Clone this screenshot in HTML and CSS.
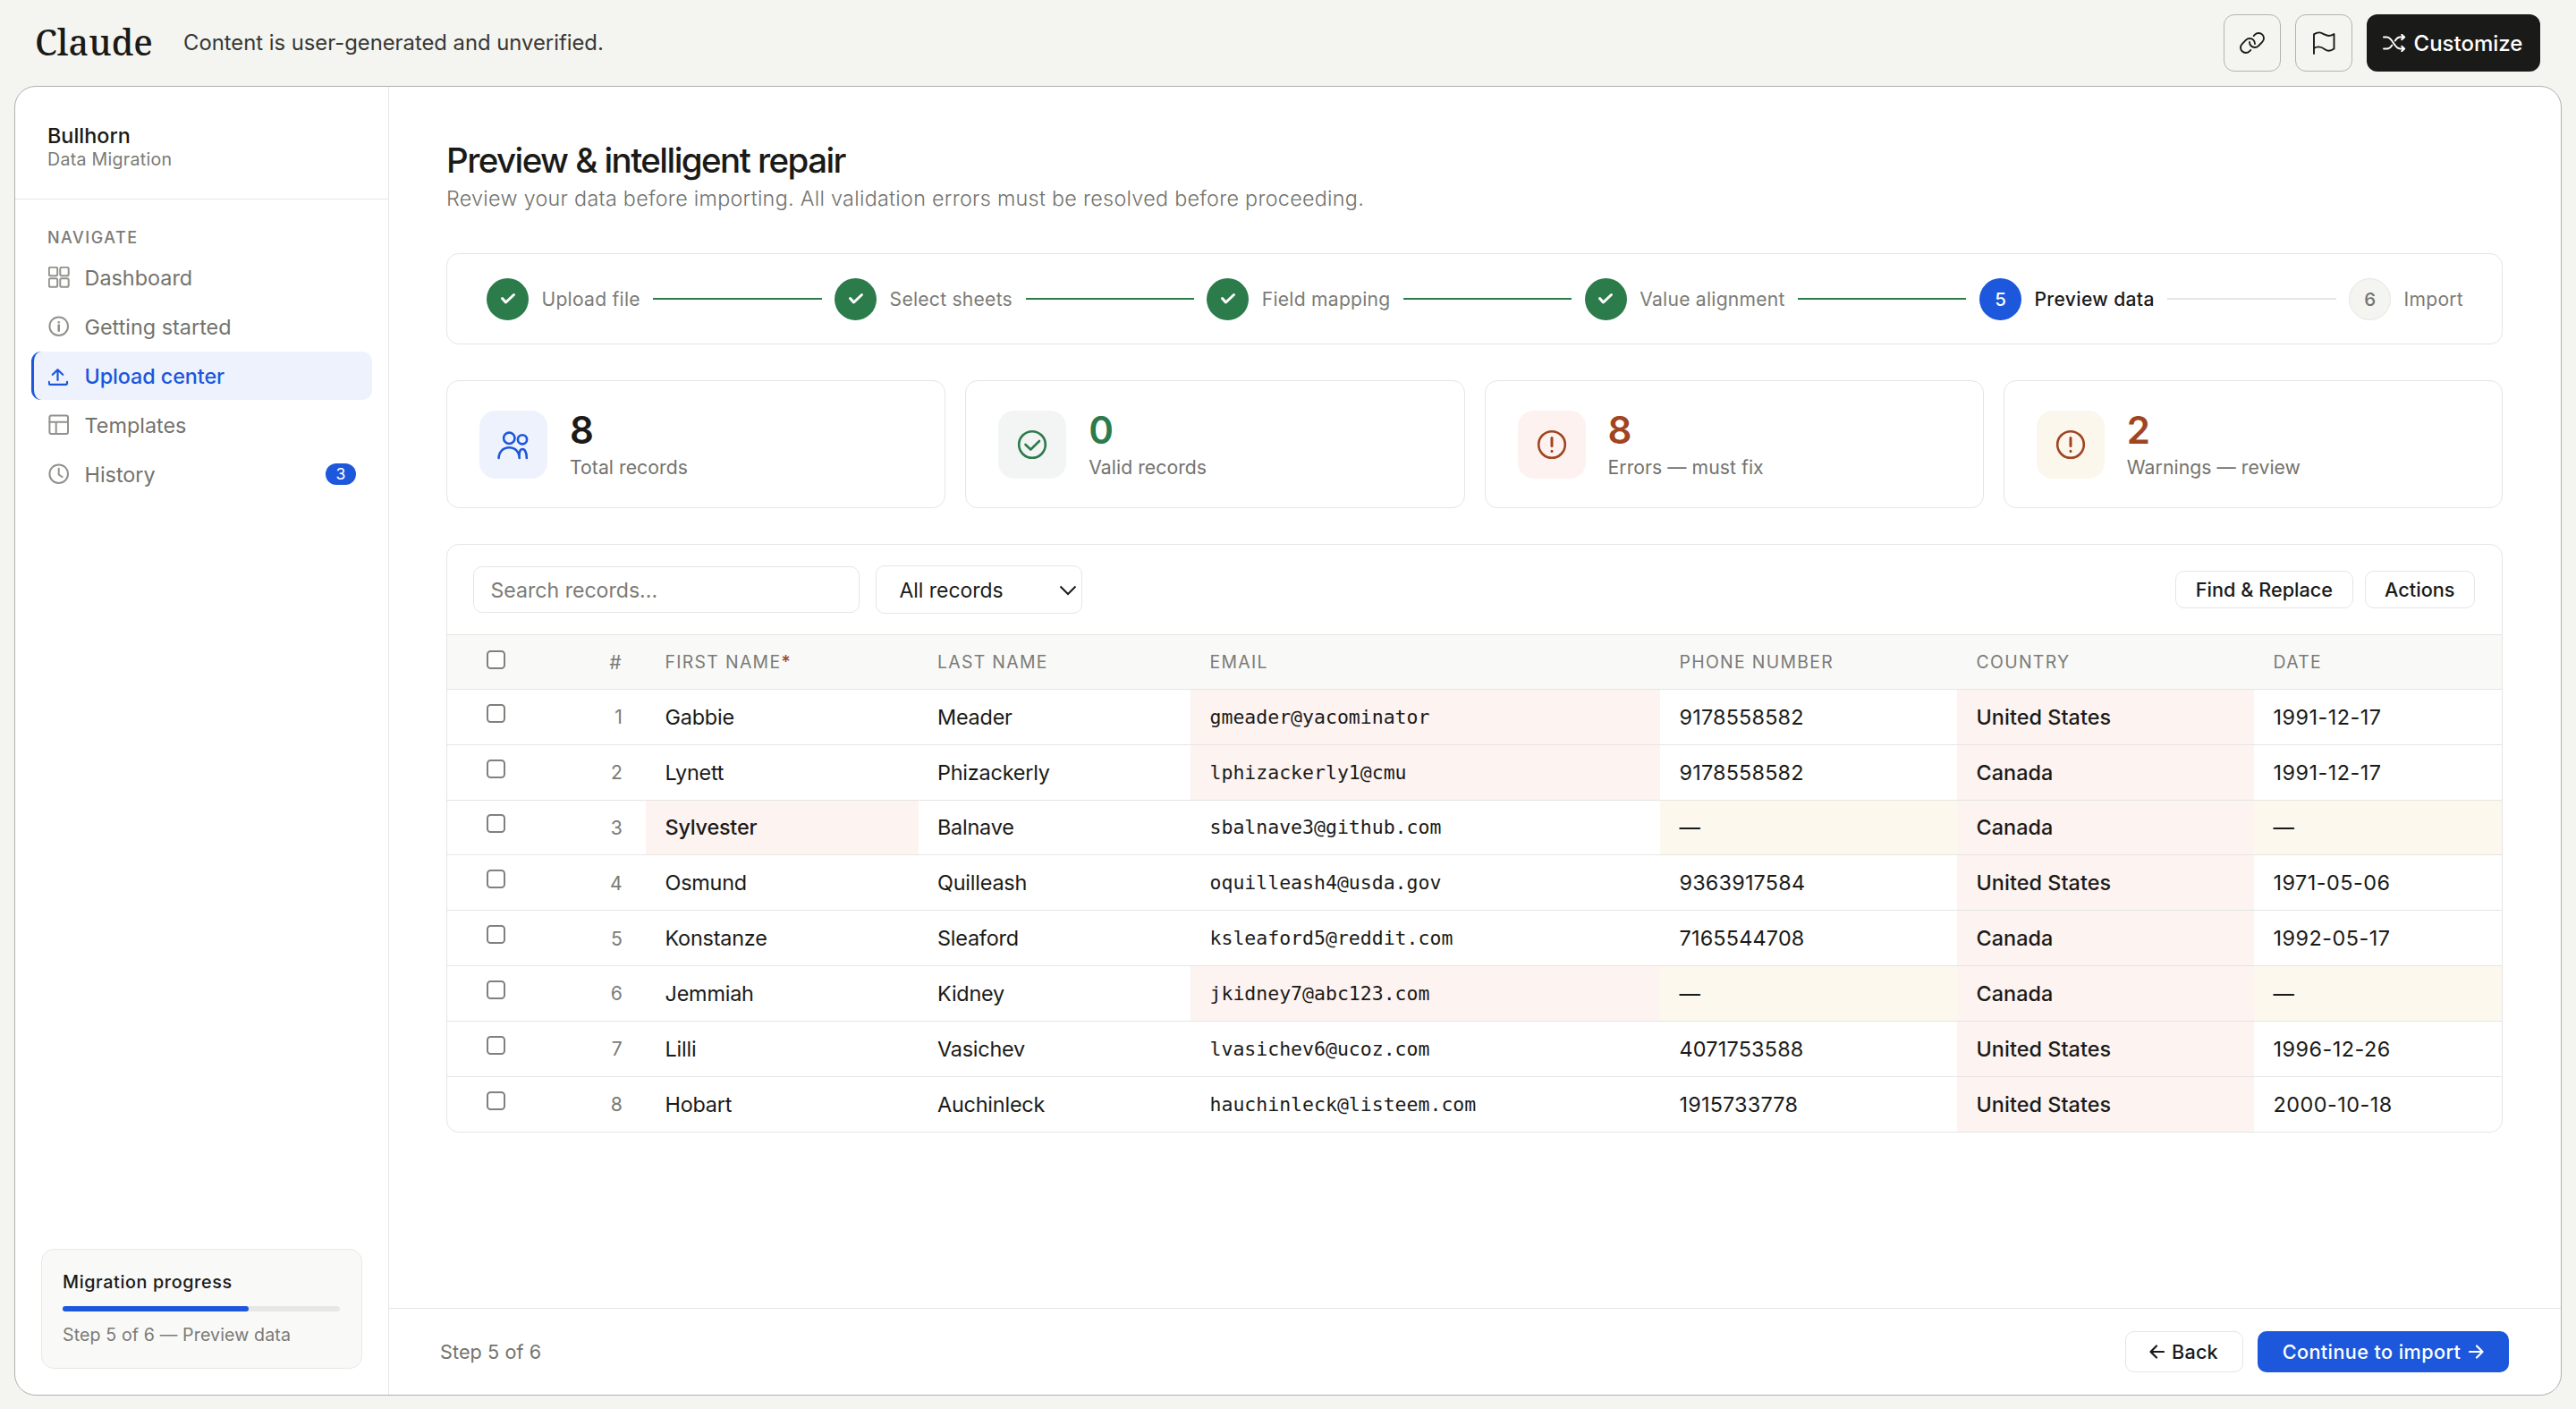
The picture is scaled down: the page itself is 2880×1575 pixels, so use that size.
FILE: index.html
```
<!DOCTYPE html>
<html lang="en">
<head>
<meta charset="utf-8">
<title>Bullhorn Data Migration</title>
<link rel="stylesheet" href="styles.css">
</head>
<body>
<header class="topbar">
  <div class="wordmark">Claude</div>
  <div class="notice">Content is user-generated and unverified.</div>
  <div class="top-actions">
    <button class="square-btn" aria-label="Copy link"><svg width="32" height="32" viewBox="0 0 256 256" fill="none" stroke="currentColor" stroke-width="15" stroke-linecap="round" stroke-linejoin="round"><path d="M141.38 64.68l11-11a46.62 46.62 0 0 1 65.94 0a46.62 46.62 0 0 1 0 65.94L193.94 144 183.6 154.34a46.63 46.63 0 0 1-66-.05A46.48 46.48 0 0 1 104 120.06"/><path d="M114.62 191.32l-11 11a46.63 46.63 0 0 1-66-.05a46.63 46.63 0 0 1 .06-65.89L72.4 101.66a46.62 46.62 0 0 1 65.94 0A46.45 46.45 0 0 1 152 135.94"/></svg></button>
    <button class="square-btn" aria-label="Report"><svg width="26" height="26" viewBox="0 0 26 26" fill="none" stroke="currentColor" stroke-width="1.9" stroke-linecap="round" stroke-linejoin="round"><path d="M2 25V3.4C7.5-.3 10.5 1.8 13.5 3.4S20.5 6 24.5 3v16.6C20.5 22.5 17 22.3 14 20S7.5 15.600 2 18.900"/></svg></button>
    <button class="customize"><svg width="26" height="20" viewBox="0 0 26 20" fill="none" stroke="currentColor" stroke-width="1.9" stroke-linecap="round" stroke-linejoin="round"><path d="M1 3.500H4.500C11.500 3.500 12 16.500 19.500 16.500H24M1 16.500H4.500C7.500 16.500 9 14.600 10.300 12.500M13.800 7.500C15.200 5.200 16.800 3.500 19.500 3.500H24M21.200 .8L24.200 3.500L21.200 6.300M21.200 13.700L24.200 16.500L21.200 19.200"/></svg>Customize</button>
  </div>
</header>
<div class="frame">
  <aside class="sidebar">
    <div class="brand">
      <div class="brand-name">Bullhorn</div>
      <div class="brand-sub">Data Migration</div>
    </div>
    <div class="nav-title">NAVIGATE</div>
    <nav class="nav">
      <a class="nav-item"><svg class="nav-icon" viewBox="0 0 24 24"><rect x=".8" y=".8" width="9.400" height="9.400" rx="1.800"/><rect x="13.300" y=".8" width="9.400" height="9.400" rx="1.800"/><rect x=".8" y="13.300" width="9.400" height="9.400" rx="1.800"/><rect x="13.300" y="13.300" width="9.400" height="9.400" rx="1.800"/></svg><span>Dashboard</span></a>
      <a class="nav-item"><svg class="nav-icon" viewBox="0 0 24 24"><circle cx="11.700" cy="11.700" r="10.300"/><path d="M11.700 10.500V16.800M11.700 7.200V7.300" stroke-width="2.600"/></svg><span>Getting started</span></a>
      <a class="nav-item active"><svg class="nav-icon" viewBox="0 0 24 24"><path d="M.8 18.800V20.200Q.8 21.800 2.400 21.800H19.400Q21 21.800 21 20.200V18.800M10.500 17V5.500M4.800 10.800L10.500 5.200L16.200 10.800"/></svg><span>Upload center</span></a>
      <a class="nav-item"><svg class="nav-icon" viewBox="0 0 24 24"><rect x="1.400" y="1.400" width="20.600" height="20.600" rx="2"/><path d="M1.400 8.700H22M8.700 8.700V22"/></svg><span>Templates</span></a>
      <a class="nav-item"><svg class="nav-icon" viewBox="0 0 24 24"><circle cx="11.700" cy="11.700" r="10.300"/><path d="M11.700 5.800V12.500L15.700 15.300"/></svg><span>History</span><span class="badge">3</span></a>
    </nav>
    <div class="progress-card">
      <div class="progress-title">Migration progress</div>
      <div class="bar"><div class="bar-fill" style="width:67%"></div></div>
      <div class="progress-sub">Step 5 of 6 — Preview data</div>
    </div>
  </aside>
  <div class="content">
    <main class="main">
      <h1>Preview &amp; intelligent repair</h1>
      <p class="lead">Review your data before importing. All validation errors must be resolved before proceeding.</p>
      <div class="stepper">
        <div class="dot done"><svg width="46" height="46" viewBox="0 0 46 46"><path d="M16.500 22.500L20.500 27L29.500 18.500"/></svg></div><span class="step-label">Upload file</span><i class="line done"></i>
        <div class="dot done"><svg width="46" height="46" viewBox="0 0 46 46"><path d="M16.500 22.500L20.500 27L29.500 18.500"/></svg></div><span class="step-label">Select sheets</span><i class="line done"></i>
        <div class="dot done"><svg width="46" height="46" viewBox="0 0 46 46"><path d="M16.500 22.500L20.500 27L29.500 18.500"/></svg></div><span class="step-label">Field mapping</span><i class="line done"></i>
        <div class="dot done"><svg width="46" height="46" viewBox="0 0 46 46"><path d="M16.500 22.500L20.500 27L29.500 18.500"/></svg></div><span class="step-label">Value alignment</span><i class="line done"></i>
        <div class="dot current">5</div><span class="step-label on">Preview data</span><i class="line"></i>
        <div class="dot">6</div><span class="step-label">Import</span>
      </div>
      <section class="stats">
        <div class="stat"><div class="tile blue"><svg width="76" height="76" viewBox="0 0 76 76"><circle cx="33.300" cy="30.800" r="6.200"/><circle cx="48" cy="32.300" r="5.100"/><path d="M21.600 53C21.600 46.300 26.500 41.300 33.300 41.300S44.700 46.300 44.700 53M44.600 50C44.600 45 46 43 48.300 43S52.800 46.500 52.800 53"/></svg></div><div><div class="num">8</div><div class="stat-label">Total records</div></div></div>
        <div class="stat"><div class="tile gray"><svg width="76" height="76" viewBox="0 0 76 76"><circle cx="38" cy="38" r="14.800"/><path d="M30.500 38L36.300 43.500L46 34"/></svg></div><div><div class="num green">0</div><div class="stat-label">Valid records</div></div></div>
        <div class="stat"><div class="tile red"><svg width="76" height="76" viewBox="0 0 76 76"><circle cx="38" cy="38" r="14.800"/><path d="M38 30.500V39.500M38 45.200V45.400" stroke-width="3"/></svg></div><div><div class="num rust">8</div><div class="stat-label">Errors — must fix</div></div></div>
        <div class="stat"><div class="tile amber"><svg width="76" height="76" viewBox="0 0 76 76"><circle cx="38" cy="38" r="14.800"/><path d="M38 30.500V39.500M38 45.200V45.400" stroke-width="3"/></svg></div><div><div class="num rust">2</div><div class="stat-label">Warnings — review</div></div></div>
      </section>
      <section class="table-card">
        <div class="toolbar">
          <div class="search">Search records...</div>
          <div class="select">All records<svg width="20" height="12" viewBox="0 0 20 12"><path d="M1.500 1.500L10 10L18.500 1.500" fill="none" stroke="#1a1a18" stroke-width="2"/></svg></div>
          <div class="tool-actions"><button class="small-btn">Find &amp; Replace</button><button class="small-btn">Actions</button></div>
        </div>
        <div class="row head"><div><i class="box"></i></div><div class="idx">#</div><div>FIRST NAME<b class="req">*</b></div><div>LAST NAME</div><div>EMAIL</div><div>PHONE NUMBER</div><div>COUNTRY</div><div>DATE</div></div>
        <div class="row"><div><i class="box"></i></div><div class="idx">1</div><div class="name">Gabbie</div><div class="name">Meader</div><div class="mail err">gmeader@yacominator</div><div>9178558582</div><div class="err strong">United States</div><div class="date">1991-12-17</div></div>
        <div class="row"><div><i class="box"></i></div><div class="idx">2</div><div class="name">Lynett</div><div class="name">Phizackerly</div><div class="mail err">lphizackerly1@cmu</div><div>9178558582</div><div class="err strong">Canada</div><div class="date">1991-12-17</div></div>
        <div class="row"><div><i class="box"></i></div><div class="idx">3</div><div class="name err strong">Sylvester</div><div class="name">Balnave</div><div class="mail">sbalnave3@github.com</div><div class="warn">—</div><div class="err strong">Canada</div><div class="warn">—</div></div>
        <div class="row"><div><i class="box"></i></div><div class="idx">4</div><div class="name">Osmund</div><div class="name">Quilleash</div><div class="mail">oquilleash4@usda.gov</div><div>9363917584</div><div class="err strong">United States</div><div class="date">1971-05-06</div></div>
        <div class="row"><div><i class="box"></i></div><div class="idx">5</div><div class="name">Konstanze</div><div class="name">Sleaford</div><div class="mail">ksleaford5@reddit.com</div><div>7165544708</div><div class="err strong">Canada</div><div class="date">1992-05-17</div></div>
        <div class="row"><div><i class="box"></i></div><div class="idx">6</div><div class="name">Jemmiah</div><div class="name">Kidney</div><div class="mail err">jkidney7@abc123.com</div><div class="warn">—</div><div class="err strong">Canada</div><div class="warn">—</div></div>
        <div class="row"><div><i class="box"></i></div><div class="idx">7</div><div class="name">Lilli</div><div class="name">Vasichev</div><div class="mail">lvasichev6@ucoz.com</div><div>4071753588</div><div class="err strong">United States</div><div class="date">1996-12-26</div></div>
        <div class="row"><div><i class="box"></i></div><div class="idx">8</div><div class="name">Hobart</div><div class="name">Auchinleck</div><div class="mail">hauchinleck@listeem.com</div><div>1915733778</div><div class="err strong">United States</div><div class="date">2000-10-18</div></div>
      </section>
    </main>
    <footer class="footer">
      <span class="step-count">Step 5 of 6</span>
      <button class="back"><svg width="17" height="16" viewBox="0 0 17 16"><path d="M16 8H1.500M8 1.500L1.500 8L8 14.500"/></svg>Back</button>
      <button class="next">Continue to import<svg width="17" height="16" viewBox="0 0 17 16"><path d="M1 8H15.500M9 1.500L15.500 8L9 14.500"/></svg></button>
    </footer>
  </div>
</div>
</body>
</html>
```
FILE: styles.css
```
* { box-sizing: border-box; }
body {
  margin: 0;
  width: 2880px;
  height: 1575px;
  overflow: hidden;
  display: flex;
  flex-direction: column;
  background: #f4f5f0;
  color: #1a1a18;
  font-family: Inter, "Liberation Sans", sans-serif;
  font-size: 23.4px;
}
button { font: inherit; color: inherit; background: none; border: 0; padding: 0; display: flex; align-items: center; justify-content: center; }
svg { flex: none; display: block; }

.topbar { height: 96px; flex: none; display: flex; align-items: center; padding: 0 40px 0 39px; }
.wordmark { font-family: "Noto Serif", "Liberation Serif", serif; font-size: 39.5px; font-weight: 500; line-height: 46px; width: 166px; padding-bottom: 2px; }
.notice { font-size: 23.8px; line-height: 30px; color: #373734; }
.top-actions { margin-left: auto; display: flex; gap: 16px; }
.square-btn { width: 64px; height: 64px; border: 1px solid #b3b3af; border-radius: 12px; }
.customize { width: 194px; height: 64px; border-radius: 12px; background: #1a1a18; color: #fff; gap: 9px; padding-right: 2px; font-size: 24px; font-weight: 500; }

.frame { flex: 1; margin: 0 16px 15px; border: 1px solid #b0b0ac; border-radius: 24px; background: #fff; display: flex; overflow: hidden; }
.sidebar { width: 418px; flex: none; border-right: 1px solid #e5e5e3; display: flex; flex-direction: column; }
.brand { height: 126px; border-bottom: 1px solid #e5e5e3; padding: 41px 36px 0; }
.brand-name { font-weight: 500; line-height: 28px; }
.brand-sub { font-size: 19.6px; line-height: 24px; letter-spacing: .27px; color: #7b7b76; }
.nav-title { margin: 31.5px 36px 6.5px; font-size: 18px; font-weight: 500; line-height: 22px; letter-spacing: 1.5px; color: #7b7b76; }
.nav { display: flex; flex-direction: column; gap: 1px; padding: 0 18px; }
.nav-item { height: 54px; display: flex; align-items: center; gap: 16.5px; padding: 0 18px 0 16px; border-left: 3px solid transparent; border-radius: 11px; color: #73736e; }
.nav-icon { width: 24px; height: 24px; fill: none; stroke: #92928d; stroke-width: 2; stroke-linecap: round; stroke-linejoin: round; }
.nav-item.active { background: #eef2fd; border-left-color: #1c57dc; color: #1c57dc; }
.nav-item.active span { font-weight: 500; letter-spacing: -.1px; }
.nav-item.active .nav-icon { stroke: #1c57dc; stroke-width: 2.2; }
.badge { margin-left: auto; width: 34px; height: 24px; border-radius: 12px; background: #1c57dc; color: #fff; font-size: 17.5px; line-height: 24px; text-align: center; }
.progress-card { margin: auto 29px 29px; height: 134px; border: 1px solid #e8e8e5; border-radius: 14px; background: #f9f9f8; padding: 22px 24px 0 23px; }
.progress-title { font-size: 19.8px; font-weight: 500; line-height: 28px; letter-spacing: .6px; }
.bar { margin: 13px 0; height: 6px; border-radius: 3px; background: #e7e8e4; }
.bar-fill { height: 6px; border-radius: 3px; background: #1c57dc; }
.progress-sub { font-size: 19.6px; line-height: 26px; letter-spacing: .12px; color: #7b7b76; white-space: nowrap; }

.content { flex: 1; min-width: 0; display: flex; flex-direction: column; }
.main { flex: 1; padding: 58px 65px 0 64px; }
h1 { margin: 0; font-size: 38.5px; font-weight: 500; line-height: 48px; letter-spacing: -1.57px; }
.lead { margin: 2px 0 44px; font-size: 23.3px; line-height: 34px; font-weight: 300; letter-spacing: .3px; color: #73736e; }

.stepper { height: 102px; border: 1px solid #e5e5e3; border-radius: 14px; display: flex; align-items: center; gap: 14.5px; padding: 0 43px 0 44px; }
.dot { width: 47px; height: 47px; flex: none; border-radius: 50%; background: #f4f4f1; border: 1px solid #e5e5e1; color: #73736e; font-size: 20.5px; font-weight: 500; display: flex; align-items: center; justify-content: center; }
.dot.done { background: #2c7b4b; border: 0; }
.dot.current { background: #1c57dc; border: 0; color: #fff; }
.dot path { fill: none; stroke: #fff; stroke-width: 3; stroke-linecap: round; stroke-linejoin: round; }
.step-label { font-size: 21.1px; letter-spacing: .25px; color: #7b7b76; white-space: nowrap; }
.step-label.on { color: #1a1a18; font-weight: 500; letter-spacing: .35px; }
.line { flex: 1; height: 2px; background: #e5e5e3; }
.line.done { background: #2c7b4b; }

.stats { margin-top: 40px; display: grid; grid-template-columns: repeat(4, 1fr); gap: 22px; }
.stat { height: 143px; border: 1px solid #e5e5e3; border-radius: 14px; display: flex; align-items: center; gap: 25px; padding-left: 36px; }
.tile { width: 76px; height: 76px; border-radius: 18px; }
.tile svg { fill: none; stroke: currentColor; stroke-width: 2.600; stroke-linecap: round; stroke-linejoin: round; }
.blue { background: #eef2fd; color: #1c57dc; }
.gray { background: #f3f4f4; color: #2c7b4b; }
.red { background: #fdf2f0; color: #a14420; }
.amber { background: #fcf7ec; color: #a14420; }
.num { font-size: 42px; font-weight: 600; line-height: 42px; padding-top: 1px; }
.num.green { color: #2c7b4b; }
.num.rust { color: #a14420; }
.stat-label { margin-top: 7px; font-size: 21.2px; line-height: 26px; letter-spacing: .05px; color: #73736e; }

.table-card { margin-top: 40px; border: 1px solid #e5e5e3; border-radius: 14px; overflow: hidden; }
.toolbar { height: 101px; display: flex; align-items: center; padding: 0 30px 0 29px; border-bottom: 1px solid #e5e5e3; }
.search { width: 432px; height: 52px; border: 1px solid #e5e5e3; border-radius: 10px; padding-left: 18.5px; line-height: 52px; font-size: 23.1px; color: #7b7b76; }
.select { margin-left: 18px; width: 231px; height: 54px; border: 1px solid #e5e5e3; border-radius: 10px; padding: 1px 5px 0 25.5px; font-size: 22.9px; display: flex; align-items: center; justify-content: space-between; }
.tool-actions { margin-left: auto; display: flex; gap: 13px; }
.small-btn { height: 42px; border: 1px solid #e5e5e3; border-radius: 10px; padding: 0 21.5px; font-size: 21.7px; font-weight: 500; }

.row { height: 61.8px; display: grid; grid-template-columns: 111px 111px 304.500px 304.500px 525px 332px 332px 1fr; border-bottom: 1px solid #e5e5e3; letter-spacing: .2px; }
.row > div { padding: 0 22px 0 21.5px; display: flex; align-items: center; }
.row > div:first-child { padding: 0 0 8px 44px; }
.row > .idx { justify-content: flex-end; padding-right: 26px; color: #7b7b76; font-size: 21.2px; }
.row:last-child { border-bottom: 0; height: 61px; }
.row.head { height: 61px; background: #f9f9f8; font-size: 19.4px; letter-spacing: 1.32px; color: #7b7b76; }
.row.head > div:first-child { padding-bottom: 5px; }
.row.head .req { color: #a14420; font-weight: 500; letter-spacing: 0; }
.box { width: 21px; height: 21px; border: 2px solid #80807d; border-radius: 4.500px; background: #fff; }
.row > .name { letter-spacing: -.2px; }
.row > .mail { font-family: "DejaVu Sans Mono", "Liberation Mono", monospace; font-size: 21.5px; letter-spacing: 0; }
.row > .date { letter-spacing: .5px; }
.err { background: #fdf3f1; }
.warn { background: #fcf8ed; }
.strong { font-weight: 550; letter-spacing: .05px; }

.footer { height: 97px; flex: none; border-top: 1px solid #e5e5e3; display: flex; align-items: center; padding: 0 58px 0 57px; font-size: 21.600px; }
.step-count { color: #73736e; margin-right: auto; letter-spacing: .1px; }
.footer button { height: 46px; border-radius: 10px; font-weight: 500; gap: 8px; }
.footer path { fill: none; stroke: currentColor; stroke-width: 2.200; stroke-linecap: round; stroke-linejoin: round; }
.footer .back { width: 132px; border: 1px solid #e5e5e3; letter-spacing: .2px; }
.footer .next { width: 281px; margin-left: 16.500px; color: #fff; background: #1c57dc; gap: 9px; letter-spacing: .42px; }
```
